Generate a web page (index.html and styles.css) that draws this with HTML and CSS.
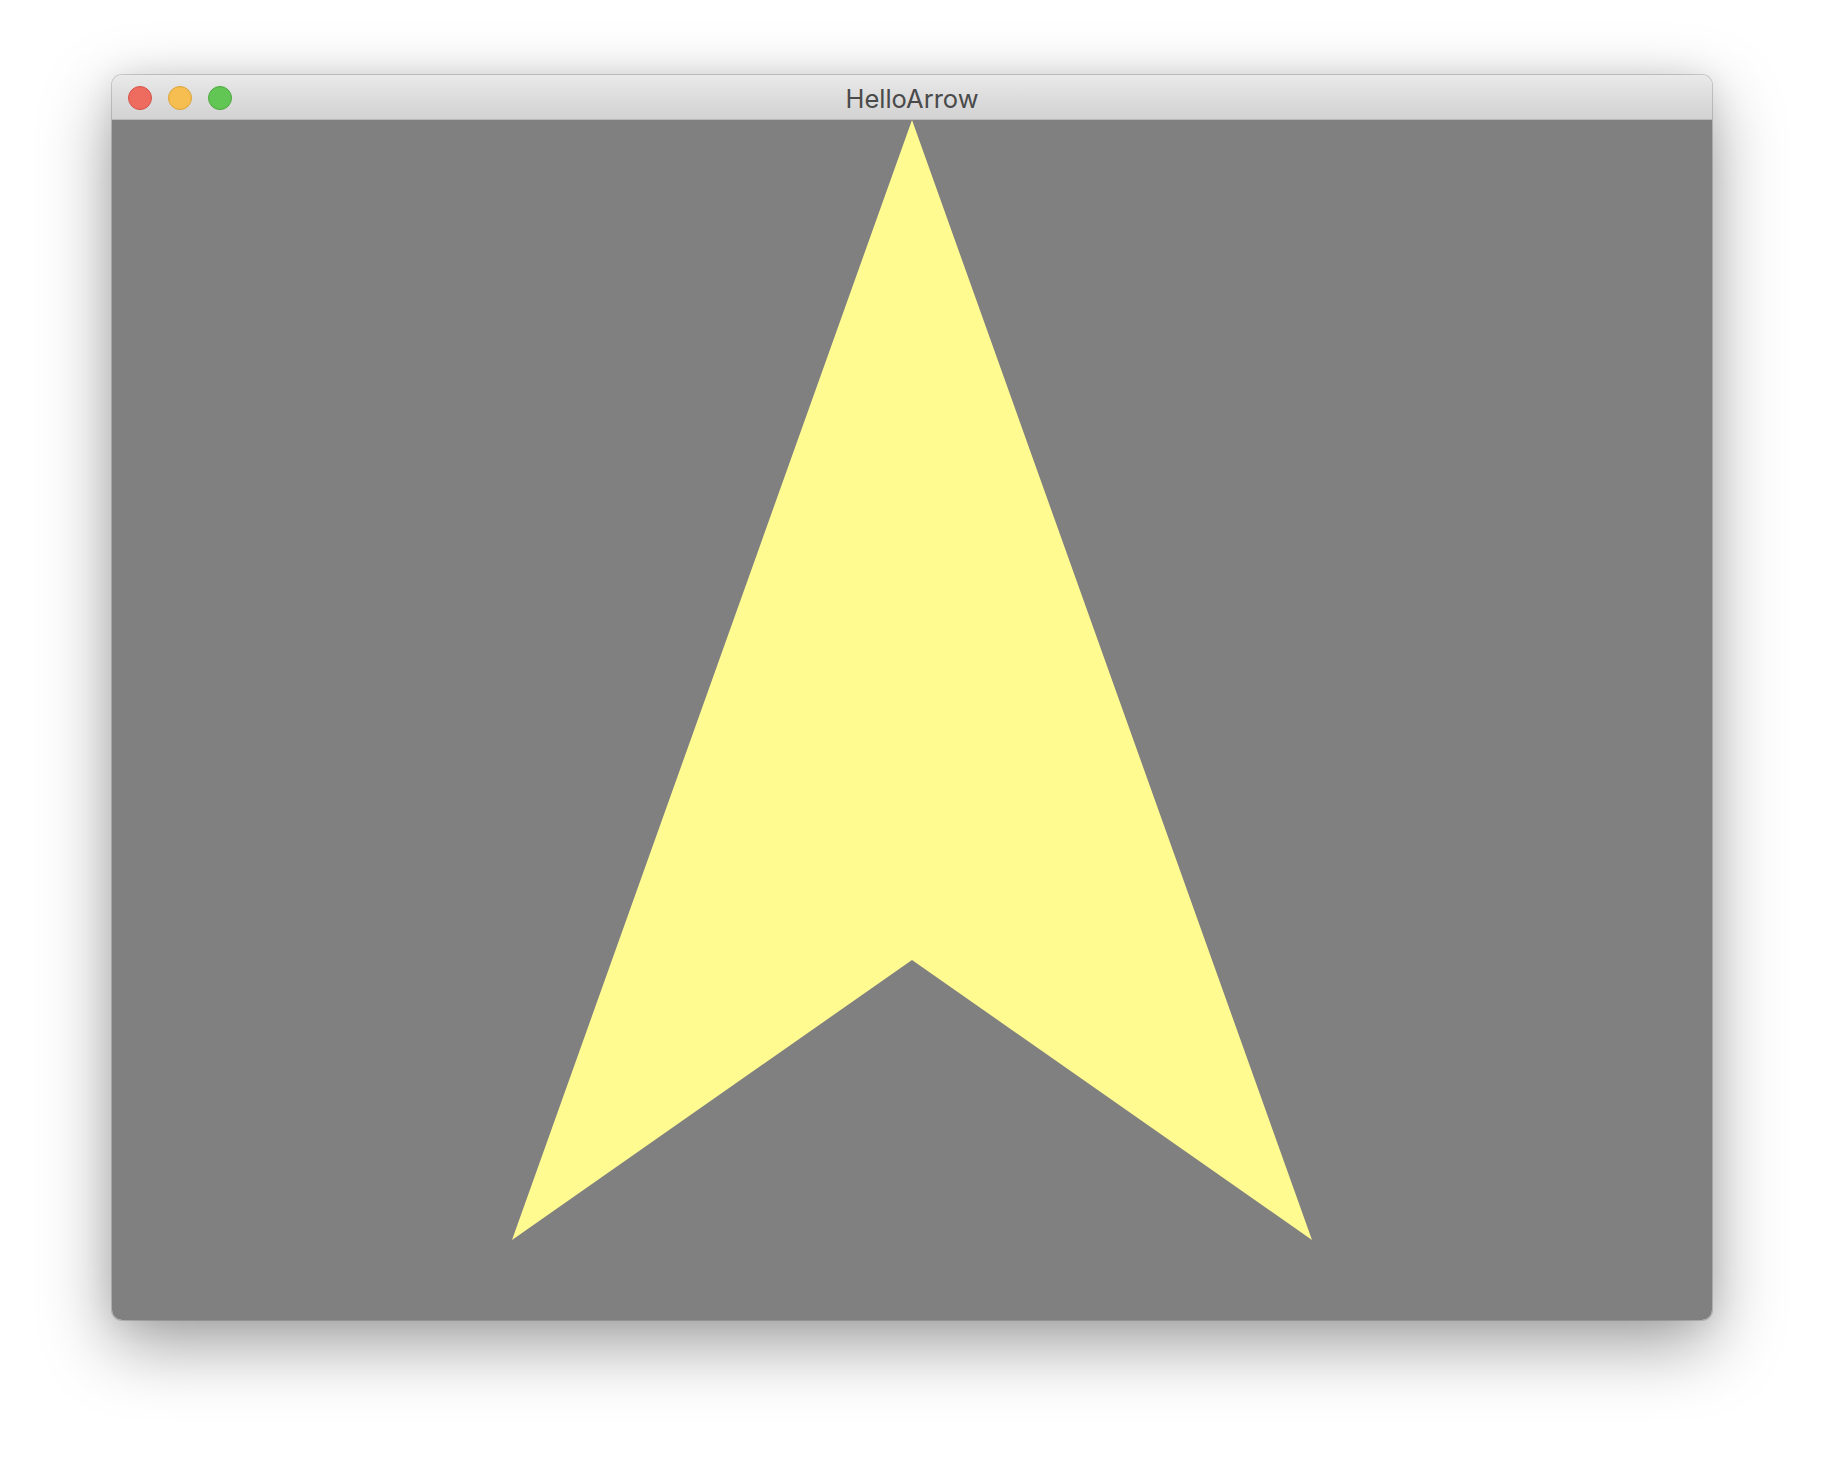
FILE: index.html
```html
<!DOCTYPE html>
<html>
<head>
<meta charset="utf-8">
<link rel="stylesheet" href="styles.css">
</head>
<body>
<div class="stage">
  <div class="window">
    <div class="titlebar">
      <div class="lights">
        <span class="light red"></span>
        <span class="light yellow"></span>
        <span class="light green"></span>
      </div>
      <div class="title">HelloArrow</div>
    </div>
    <div class="content">
      <svg class="arrow" width="1600" height="1200" viewBox="0 0 1600 1200">
        <polygon points="800,0 1200,1120 800,840 400,1120" fill="#fffb91"/>
      </svg>
    </div>
  </div>
</div>
</body>
</html>
```
FILE: styles.css
```css
html, body {
  margin: 0;
  padding: 0;
  background: #ffffff;
}
.stage {
  width: 1824px;
  height: 1468px;
  padding: 75px 0 0 112px;
  box-sizing: border-box;
}
.window {
  width: 1600px;
  border-radius: 10px;
  overflow: hidden;
  box-shadow: 0 0 0 1px rgba(0,0,0,0.16), 0 24px 70px rgba(0,0,0,0.38), 0 0 30px rgba(0,0,0,0.08);
}
.titlebar {
  height: 44px;
  border-bottom: 1px solid #b9b9b9;
  background: linear-gradient(#e9e9e9, #d2d2d2);
  position: relative;
  display: flex;
  align-items: center;
  justify-content: center;
}
.lights {
  position: absolute;
  left: 16px;
  top: 11px;
  display: flex;
  gap: 16px;
}
.light {
  width: 24px;
  height: 24px;
  border-radius: 50%;
  box-sizing: border-box;
}
.red { background: #ee6b60; border: 1px solid #d5544a; }
.yellow { background: #f6be50; border: 1px solid #dba43a; }
.green { background: #62c654; border: 1px solid #4ea83f; }
.title {
  font-family: "Inter", "Noto Sans", sans-serif;
  font-size: 25.5px;
  color: #4a4a4a;
  line-height: 1;
  padding-top: 4px;
}
.content {
  width: 1600px;
  height: 1200px;
  background: #808080;
}
.arrow {
  display: block;
}
```
